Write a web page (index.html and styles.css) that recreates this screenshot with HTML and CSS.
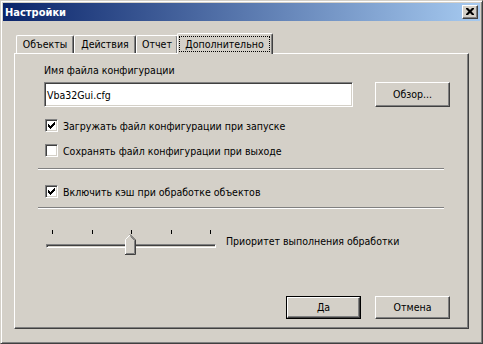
FILE: index.html
```html
<!DOCTYPE html>
<html>
  <head>
    <meta charset="utf-8">
    <link rel="stylesheet" href="styles.css">
  </head>
  <body>
    <div class="window">
      <div class="titlebar">
        <span class="title">Настройки</span>
        <div class="close">
          <svg width="8" height="7" viewBox="0 0 8 7">
            <path d="M0 0h2l2 2 2-2h2v1l-2.5 2.5 2.5 2.5v1h-2l-2-2-2 2h-2v-1l2.5-2.5-2.5-2.5z" fill="#000"/>
          </svg>
        </div>
      </div>

      <div class="client">
        <div class="tabs">
          <div class="tab t1">Объекты</div>
          <div class="tab t2">Действия</div>
          <div class="tab t3">Отчет</div>
          <div class="tab active"><span class="focus">Дополнительно</span></div>
        </div>

        <div class="panel">
          <div class="label">Имя файла конфигурации</div>
          <div class="file-row">
            <div class="edit">Vba32Gui.cfg</div>
            <div class="btn browse">Обзор...</div>
          </div>

          <div class="check first"><span class="box on"></span>Загружать файл конфигурации при запуске</div>
          <div class="check"><span class="box"></span>Сохранять файл конфигурации при выходе</div>
          <div class="sep s1"></div>
          <div class="check third"><span class="box on"></span>Включить кэш при обработке объектов</div>
          <div class="sep s2"></div>

          <div class="slider-row">
            <div class="slider">
              <div class="ticks">
                <span></span><span></span><span></span><span></span><span></span>
              </div>
              <div class="channel"></div>
              <svg class="thumb" width="11" height="21" viewBox="0 0 11 21">
                <path d="M0 5.5L5 0.5 10 5.5V20H0z" fill="#d4d0c8"/>
                <path d="M0.5 20V5.5L5 1" fill="none" stroke="#fff"/>
                <path d="M5 0.5L10.5 6V20.5H0" fill="none" stroke="#404040"/>
                <path d="M5.5 2.5L9.5 6.5V19.5H1" fill="none" stroke="#808080"/>
              </svg>
            </div>
            <div class="slider-label">Приоритет выполнения обработки</div>
          </div>

          <div class="buttons">
            <div class="default"><div class="btn">Да</div></div>
            <div class="btn">Отмена</div>
          </div>
        </div>
      </div>
    </div>
  </body>
</html>
```

FILE: styles.css
```css
body {
  margin: 0;
  font-family: "DejaVu Sans Condensed", "DejaVu Sans", sans-serif;
  font-size: 10.5px;
  color: #000;
}

.window {
  width: 483px;
  height: 344px;
  box-sizing: border-box;
  background: #d4d0c8;
  border: 1px solid;
  border-color: #d4d0c8 #404040 #404040 #d4d0c8;
  box-shadow: inset 1px 1px #fff, inset -1px -1px #808080;
  padding: 2px;
  display: flex;
  flex-direction: column;
}

.titlebar {
  height: 18px;
  display: flex;
  align-items: center;
  background: linear-gradient(to right, #0a246a, #a6caf0);
  padding-left: 2px;
}

.title {
  color: #fff;
  font-weight: bold;
  font-size: 11px;
  flex: 1;
}

.close {
  width: 16px;
  height: 14px;
  box-sizing: border-box;
  margin-right: 2px;
  background: #d4d0c8;
  border: 1px solid;
  border-color: #fff #404040 #404040 #fff;
  box-shadow: inset -1px -1px #808080;
  display: flex;
  align-items: center;
  justify-content: center;
  padding: 0 1px 1px 0;
}

.close svg {
  display: block;
}

.client {
  padding: 12px 11px 0 11px;
  flex: 1;
  display: flex;
  flex-direction: column;
}

.tabs {
  display: flex;
  align-items: flex-end;
  height: 20px;
  padding-left: 2px;
  position: relative;
  z-index: 1;
}

.tab {
  height: 18px;
  box-sizing: border-box;
  border-top: 1px solid #fff;
  border-left: 1px solid #fff;
  border-right: 1px solid #404040;
  border-top-left-radius: 2px;
  border-top-right-radius: 2px;
  box-shadow: inset -1px 0 #808080;
  display: flex;
  align-items: center;
  justify-content: center;
  padding-bottom: 1px;
  background: #d4d0c8;
}

.t1 { width: 58px; }
.t2 { width: 62px; }
.t3 { width: 42px; }

.tab.active {
  width: 96px;
  height: 21px;
  margin-left: -1px;
  margin-bottom: -1px;
  padding: 2px 2px 2px 1px;
  align-items: stretch;
}

.focus {
  flex: 1;
  display: flex;
  align-items: center;
  justify-content: center;
  outline: 1px dotted #000;
  outline-offset: -1px;
}

.panel {
  height: 276px;
  box-sizing: border-box;
  border: 1px solid;
  border-color: #fff #404040 #404040 #fff;
  box-shadow: inset -1px -1px #808080;
  padding: 0 18px 9px 29px;
  display: flex;
  flex-direction: column;
}

.label {
  margin-top: 9px;
  line-height: 14px;
}

.file-row {
  display: flex;
  margin-top: 5px;
  height: 25px;
}

.edit {
  width: 309px;
  box-sizing: border-box;
  background: #fff;
  border: 1px solid;
  border-color: #808080 #fff #fff #808080;
  box-shadow: inset 1px 1px #404040, inset -1px -1px #d4d0c8;
  padding-left: 2px;
  display: flex;
  align-items: center;
}

.btn {
  width: 75px;
  height: 23px;
  box-sizing: border-box;
  border: 1px solid;
  border-color: #fff #404040 #404040 #fff;
  box-shadow: inset -1px -1px #808080;
  display: flex;
  align-items: center;
  justify-content: center;
  padding-bottom: 1px;
}

.browse {
  height: 25px;
  margin-left: 22px;
}

.check {
  display: flex;
  align-items: center;
  height: 13px;
  margin-top: 12px;
  margin-left: 1px;
}

.check.first {
  margin-top: 12px;
}

.check.third {
  margin-top: 15px;
}

.box {
  width: 13px;
  height: 13px;
  box-sizing: border-box;
  background: #fff;
  border: 1px solid;
  border-color: #808080 #fff #fff #808080;
  box-shadow: inset 1px 1px #404040, inset -1px -1px #d4d0c8;
  margin-right: 5px;
  flex: none;
}

.box.on {
  background: #fff url("data:image/svg+xml,%3Csvg xmlns='http://www.w3.org/2000/svg' width='7' height='7'%3E%3Cpath d='M0 2h1v1h1v1h1v-1h1v-1h1v-1h1v-1h1v3h-1v1h-1v1h-1v1h-1v1h-1v-1h-1v-1h-1v-1h-1z' fill='black'/%3E%3C/svg%3E") no-repeat 2px 2px;
}

.sep {
  height: 1px;
  width: 406px;
  margin-left: -6px;
  background: #808080;
  border-bottom: 1px solid #fff;
}

.s1 { margin-top: 11px; }
.s2 { margin-top: 9px; }

.slider-row {
  display: flex;
  margin-top: 21px;
}

.slider {
  position: relative;
  width: 170px;
  margin-left: 2px;
}

.ticks {
  display: flex;
  justify-content: space-between;
  padding: 0 5px 0 6px;
  height: 4px;
}

.ticks span {
  width: 1px;
  height: 4px;
  background: #000;
}

.channel {
  margin-top: 10px;
  height: 4px;
  box-sizing: border-box;
  border: 1px solid;
  border-color: #808080 #fff #fff #808080;
  box-shadow: inset 1px 1px #404040;
}

.thumb {
  position: absolute;
  left: 79px;
  top: 4px;
  display: block;
}

.slider-label {
  margin-left: 10px;
  margin-top: 4px;
  line-height: 14px;
}

.buttons {
  margin-top: auto;
  display: flex;
  justify-content: flex-end;
  gap: 14px;
}

.default {
  border: 1px solid #000;
}

.default .btn {
  width: 73px;
  height: 21px;
}
```
